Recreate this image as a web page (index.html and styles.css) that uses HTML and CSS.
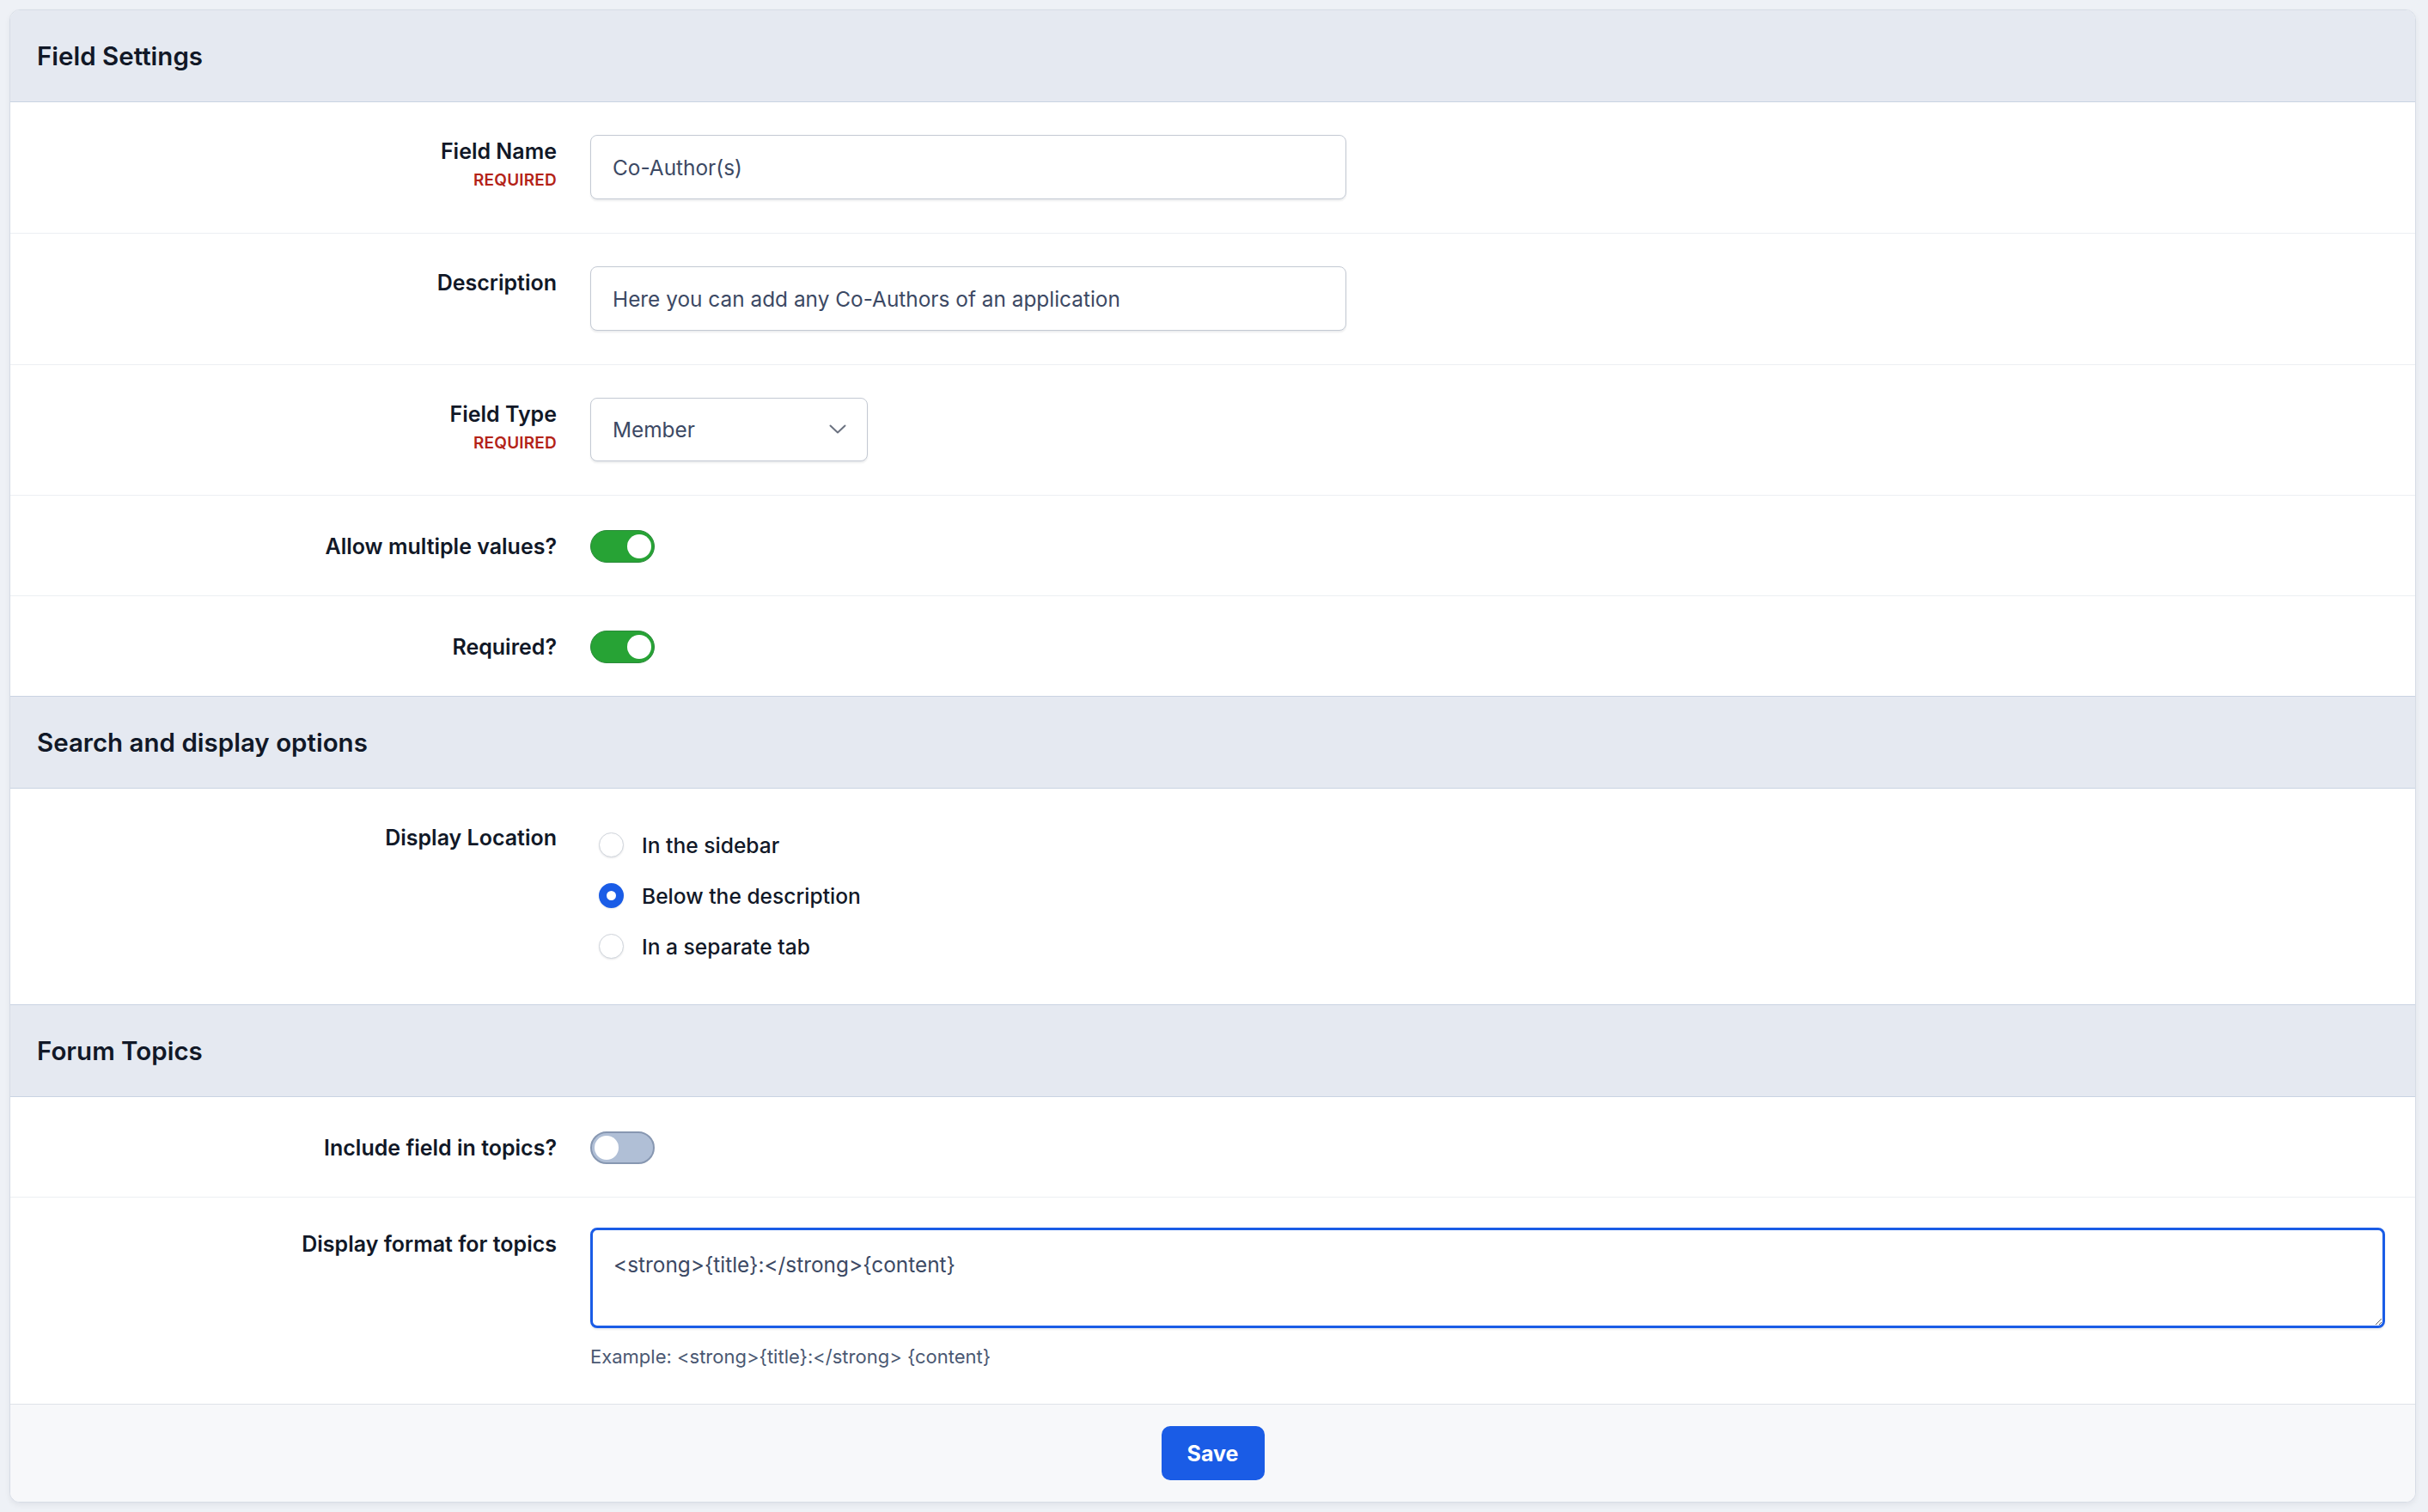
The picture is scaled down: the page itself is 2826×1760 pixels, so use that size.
FILE: index.html
```html
<!DOCTYPE html>
<html lang="en">
<head>
  <meta charset="UTF-8" />
  <title>Field Settings</title>
  <link rel="stylesheet" href="styles.css">
</head>
<body>
  <form class="card">
    <!-- Field Settings -->
    <div class="section-head first"><h2>Field Settings</h2></div>
    <div class="section">
      <div class="row">
        <label class="label">Field Name<span class="req">REQUIRED</span></label>
        <div class="control"><input class="text-input" type="text" value="Co-Author(s)"></div>
      </div>
      <div class="row">
        <label class="label">Description</label>
        <div class="control"><input class="text-input" type="text" value="Here you can add any Co-Authors of an application"></div>
      </div>
      <div class="row">
        <label class="label">Field Type<span class="req">REQUIRED</span></label>
        <div class="control">
          <div class="select-wrap">
            <select class="select"><option>Member</option></select>
            <svg class="chevron" width="20" height="11" viewBox="0 0 20 11"><path d="M1.5 1.5 L10 9.5 L18.5 1.5" fill="none" stroke="#6b7280" stroke-width="2" stroke-linecap="round" stroke-linejoin="round"/></svg>
          </div>
        </div>
      </div>
      <div class="row row-toggle">
        <label class="label">Allow multiple values?</label>
        <div class="control"><span class="toggle on"><span class="knob"></span></span></div>
      </div>
      <div class="row row-toggle">
        <label class="label">Required?</label>
        <div class="control"><span class="toggle on"><span class="knob"></span></span></div>
      </div>
    </div>

    <!-- Search and display options -->
    <div class="section-head"><h2>Search and display options</h2></div>
    <div class="section">
      <div class="row">
        <label class="label">Display Location</label>
        <div class="control radios">
          <label class="radio-item"><span class="radio"></span>In the sidebar</label>
          <label class="radio-item"><span class="radio checked"></span>Below the description</label>
          <label class="radio-item"><span class="radio"></span>In a separate tab</label>
        </div>
      </div>
    </div>

    <!-- Forum Topics -->
    <div class="section-head"><h2>Forum Topics</h2></div>
    <div class="section">
      <div class="row row-toggle">
        <label class="label">Include field in topics?</label>
        <div class="control"><span class="toggle"><span class="knob"></span></span></div>
      </div>
      <div class="row row-format">
        <label class="label">Display format for topics</label>
        <div class="control">
          <textarea id="format" class="textarea">&lt;strong&gt;{title}:&lt;/strong&gt;{content}</textarea>
          <p class="hint">Example: &lt;strong&gt;{title}:&lt;/strong&gt; {content}</p>
        </div>
      </div>
    </div>

    <div class="footer">
      <button type="button" class="save">Save</button>
    </div>
  </form>

  <script>
    const ta = document.getElementById('format');
    ta.focus();
    ta.setSelectionRange(ta.value.length, ta.value.length);
  </script>
</body>
</html>
```

FILE: styles.css
```css
* {
  margin: 0;
  padding: 0;
  box-sizing: border-box;
  font-family: 'Inter', 'Noto Sans', sans-serif;
}
body {
  background: #eef1f6;
  padding: 11px 14px 10px 11px;
  color: #111827;
}
.card {
  background: #fff;
  border: 1px solid #d6dce6;
  border-radius: 12px;
  overflow: hidden;
  box-shadow: 0 3px 6px rgba(15, 23, 42, 0.06);
}
.section-head {
  height: 108px;
  background: #e5e9f1;
  border-top: 1px solid #c9d3e2;
  border-bottom: 1px solid #c9d3e2;
  display: flex;
  align-items: center;
  padding: 0 31px;
}
.section-head.first {
  height: 107px;
  border-top: none;
}
.section-head h2 {
  font-size: 29.5px;
  font-weight: 600;
  color: #111827;
}
.row {
  display: grid;
  grid-template-columns: 636px 1fr;
  column-gap: 39px;
  padding: 38px 35px 39px 0;
  border-bottom: 1px solid #eceff3;
}
.section .row:last-child {
  border-bottom: none;
}
.row-toggle {
  align-items: center;
  padding-top: 40px;
  padding-bottom: 38px;
}
.label {
  display: flex;
  flex-direction: column;
  align-items: flex-end;
  font-size: 25px;
  font-weight: 600;
  line-height: 35px;
  padding-top: 2px;
  color: #111827;
}
.row-toggle .label {
  padding-top: 0;
}
.req {
  font-size: 19px;
  font-weight: 600;
  line-height: 24px;
  margin-top: 4px;
  color: #b42318;
  letter-spacing: 0.2px;
}
.text-input {
  width: 880px;
  height: 75px;
  border: 1px solid #c3c9d3;
  border-radius: 8px;
  padding: 0 25px;
  font-size: 24.4px;
  color: #3c4964;
  background: #fff;
  box-shadow: 0 2px 2px rgba(15, 23, 42, 0.08);
  outline: none;
}
.select-wrap {
  position: relative;
  width: 323px;
}
.select {
  appearance: none;
  -webkit-appearance: none;
  width: 323px;
  height: 74px;
  border: 1px solid #c3c9d3;
  border-radius: 8px;
  padding: 0 25px;
  font-size: 24.4px;
  color: #3c4964;
  background: #fff;
  box-shadow: 0 2px 2px rgba(15, 23, 42, 0.08);
  outline: none;
}
.chevron {
  position: absolute;
  right: 25px;
  top: 31px;
}
.toggle {
  display: flex;
  align-items: center;
  width: 75px;
  height: 38px;
  border-radius: 19px;
  background: #b0bfd6;
  border: 2px solid #8797b1;
  padding: 0 3px;
}
.toggle.on {
  justify-content: flex-end;
  background: #27a335;
  border: 1px solid #2b8a3a;
}
.knob {
  width: 28px;
  height: 28px;
  border-radius: 50%;
  background: #fff;
}
.radios {
  display: flex;
  flex-direction: column;
  gap: 24px;
  padding: 10px 0 11px 10px;
}
.radio-item {
  display: flex;
  align-items: center;
  gap: 21px;
  height: 35px;
  font-size: 24.6px;
  font-weight: 500;
  color: #111827;
}
.radio {
  width: 29px;
  height: 29px;
  border-radius: 50%;
  border: 1px solid #cfd4db;
  background: #fff;
  box-shadow: 0 1px 2px rgba(15, 23, 42, 0.1);
}
.radio.checked {
  border: 9px solid #1a5ce6;
}
.row-format {
  padding-top: 35px;
  padding-bottom: 40px;
}
.textarea {
  display: block;
  width: 100%;
  height: 117px;
  border: 3px solid #1a5ce6;
  border-radius: 8px;
  padding: 23px 24px 0;
  font-size: 24.4px;
  line-height: 35px;
  color: #3c4964;
  outline: none;
  resize: vertical;
  box-shadow: 0 2px 2px rgba(15, 23, 42, 0.08);
}
.hint {
  margin-top: 18px;
  font-size: 22px;
  line-height: 30px;
  color: #4a5872;
}
.footer {
  display: flex;
  justify-content: center;
  padding: 25px;
  background: #f7f8fa;
  border-top: 1px solid #dfe3e9;
}
.save {
  width: 120px;
  height: 63px;
  background: #1a5ce6;
  color: #fff;
  border: none;
  border-radius: 10px;
  font-size: 25px;
  font-weight: 700;
  cursor: pointer;
}
```
